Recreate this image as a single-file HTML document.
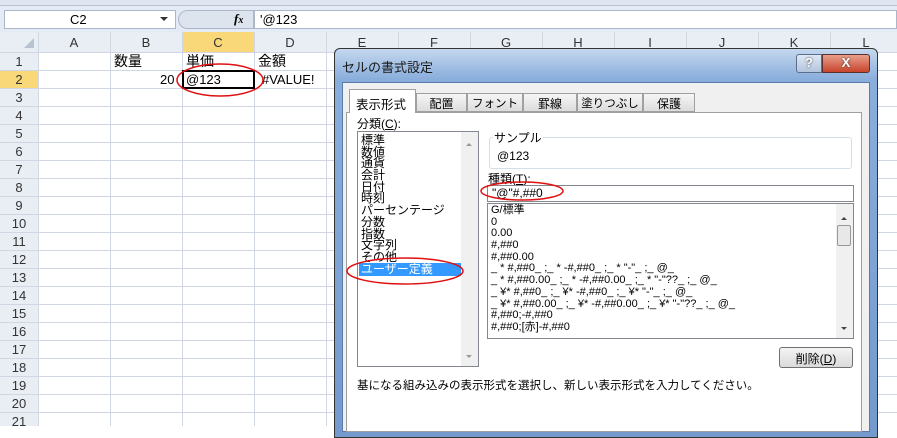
<!DOCTYPE html><html><head><meta charset="utf-8"><style>
*{margin:0;padding:0;box-sizing:border-box}
body{width:897px;height:426px;overflow:hidden;background:#fff;font-family:"Liberation Sans","Noto Sans CJK JP",sans-serif;font-size:13px;position:relative;color:#000}
.a{position:absolute;white-space:nowrap}
.jp{font-family:"Liberation Sans","Noto Sans CJK JP",sans-serif}
.tab{background:linear-gradient(#f6f6f6,#dcdcdc);border:1px solid #a0a0a0;font-size:12px;height:19px;top:93px;text-align:center;padding-top:1px}
.li div{height:11.7px;line-height:11.7px}
</style></head><body>
<div class="a" style="left:0;top:0;width:897px;height:6px;background:#dfe6f0;border-bottom:1px solid #b8c4d4"></div>
<div class="a" style="left:0;top:6px;width:897px;height:26px;background:#e4ebf5"></div>
<div class="a" style="left:4px;top:10px;width:172px;height:19px;background:#fff;border:1px solid #abb8cc"></div>
<div class="a" style="left:70px;top:12px;font-size:13px">C2</div>
<div class="a" style="left:160px;top:17px;border:4px solid transparent;border-top:4px solid #333"></div>
<div class="a" style="left:178px;top:10px;width:76px;height:19px;background:#dde4ee;border:1px solid #abb8cc;border-radius:10px 0 0 10px"></div>
<div class="a" style="left:234px;top:11px;font-family:'Liberation Serif',serif;font-style:italic;font-weight:bold;font-size:13px">f<span style="font-size:10px">x</span></div>
<div class="a" style="left:254px;top:10px;width:643px;height:19px;background:#fff;border:1px solid #abb8cc"></div>
<div class="a" style="left:260px;top:12px">'@123</div>
<svg class="a" style="left:0;top:32px" width="897" height="394">
<rect x="0" y="0" width="897" height="20" fill="#e9eef5"/>
<rect x="0" y="0" width="38" height="394" fill="#e9eef5"/>
<rect x="182" y="0" width="72" height="20" fill="#f8d878"/>
<rect x="0" y="38" width="38" height="18" fill="#f8d878"/>
<g stroke="#d0d7e2" stroke-width="1">
<path d="M38.5 0V394M110.5 0V394M182.5 0V394M254.5 0V394M326.5 0V394M398.5 0V394M470.5 0V394M542.5 0V394M614.5 0V394M686.5 0V394M758.5 0V394M830.5 0V394"/>
<path d="M0 20.5H897M0 38.5H897M0 56.5H897M0 74.5H897M0 92.5H897M0 110.5H897M0 128.5H897M0 146.5H897M0 164.5H897M0 182.5H897M0 200.5H897M0 218.5H897M0 236.5H897M0 254.5H897M0 272.5H897M0 290.5H897M0 308.5H897M0 326.5H897M0 344.5H897M0 362.5H897M0 380.5H897"/>
</g>
<path d="M24 16L34 6V16Z" fill="#b8c2d0"/>
<g font-family="Liberation Sans" font-size="13" fill="#333" text-anchor="middle">
<text x="74" y="15">A</text><text x="146" y="15">B</text><text x="218" y="15">C</text><text x="290" y="15">D</text><text x="362" y="15">E</text><text x="434" y="15">F</text><text x="506" y="15">G</text><text x="578" y="15">H</text><text x="650" y="15">I</text><text x="722" y="15">J</text><text x="794" y="15">K</text><text x="866" y="15">L</text>
<text x="19" y="34">1</text><text x="19" y="52">2</text><text x="19" y="70">3</text><text x="19" y="88">4</text><text x="19" y="106">5</text><text x="19" y="124">6</text><text x="19" y="142">7</text><text x="19" y="160">8</text><text x="19" y="178">9</text><text x="19" y="196">10</text><text x="19" y="214">11</text><text x="19" y="232">12</text><text x="19" y="250">13</text><text x="19" y="268">14</text><text x="19" y="286">15</text><text x="19" y="304">16</text><text x="19" y="322">17</text><text x="19" y="340">18</text><text x="19" y="358">19</text><text x="19" y="376">20</text><text x="19" y="394">21</text>
</g>
</svg>
<div class="a" style="left:114px;top:51px;font-size:14px">数量</div>
<div class="a" style="left:186px;top:51px;font-size:14px">単価</div>
<div class="a" style="left:258px;top:51px;font-size:14px">金額</div>
<div class="a" style="left:160px;top:72px">20</div>
<div class="a" style="left:182px;top:70px;width:73px;height:19px;border:2px solid #000"></div>
<div class="a" style="left:186px;top:72px">@123</div>
<div class="a" style="left:262px;top:72px">#VALUE!</div>
<!-- dialog -->
<div class="a" style="left:334px;top:48px;width:544px;height:390px;background:linear-gradient(#c4d8ee,#8aaedc 30px,#7399cd);border:1px solid #333;border-radius:6px 6px 0 0"></div>
<div class="a jp" style="left:342px;top:57px;font-size:13px;color:#1a1a1a">セルの書式設定</div>
<div class="a" style="left:796px;top:54px;width:26px;height:19px;background:linear-gradient(#dfe8f4,#b2c4dc);border:1px solid #5a6f8c;border-radius:3px 0 0 3px;text-align:center;font-weight:bold;color:#fff;font-size:13px;text-shadow:0 0 2px #333">?</div>
<div class="a" style="left:822px;top:54px;width:48px;height:19px;background:linear-gradient(#e8a08c,#c8442c);border:1px solid #5a3030;border-radius:0 3px 3px 0;text-align:center;font-weight:bold;color:#fff;font-size:13px;text-shadow:0 0 2px #333">X</div>
<div class="a" style="left:342px;top:82px;width:528px;height:350px;background:#f0f0f0;border:1px solid #5a7aa8"></div>
<div class="a" style="left:346px;top:112px;width:516px;height:320px;background:#fff;border:1px solid #a0a0a0"></div>
<div class="a jp" style="left:349px;top:89px;width:67px;height:24px;background:#fff;border:1px solid #a0a0a0;border-bottom:none;font-size:12.5px;padding:4px 0 0 6px">表示形式</div>
<div class="a jp tab" style="left:416px;width:51px">配置</div>
<div class="a jp tab" style="left:467px;width:56px;font-size:11.5px">フォント</div>
<div class="a jp tab" style="left:523px;width:54px">罫線</div>
<div class="a jp tab" style="left:577px;width:66px;font-size:11.5px">塗りつぶし</div>
<div class="a jp tab" style="left:643px;width:52px">保護</div>
<div class="a jp" style="left:357px;top:115px;font-size:12px">分類(<u>C</u>):</div>
<div class="a" style="left:357px;top:131px;width:122px;height:236px;border:1px solid #828790;background:#fff"></div>
<div class="a" style="left:461px;top:132px;width:17px;height:234px;background:#f0f0f0"></div>
<div class="a" style="left:466px;top:140px;border:3px solid transparent;border-bottom:3px solid #999"></div>
<div class="a" style="left:466px;top:355px;border:3px solid transparent;border-top:3px solid #999"></div>
<div class="a" style="left:359px;top:263px;width:102px;height:13px;background:#3399ff"></div>
<div class="a jp li" style="left:361px;top:135px;font-size:12px"><div>標準</div><div>数値</div><div>通貨</div><div>会計</div><div>日付</div><div>時刻</div><div>パーセンテージ</div><div>分数</div><div>指数</div><div>文字列</div><div>その他</div><div style="color:#fff">ユーザー定義</div></div>
<div class="a" style="left:489px;top:137px;width:363px;height:32px;border:1px solid #d5dfe5;border-radius:3px"></div>
<div class="a jp" style="left:493px;top:129px;font-size:12px;background:#fff;padding:0 1px">サンプル</div>
<div class="a" style="left:497px;top:149px;font-size:12px">@123</div>
<div class="a jp" style="left:488px;top:170px;font-size:12px">種類(<u>T</u>):</div>
<div class="a" style="left:487px;top:185px;width:367px;height:17px;border:1px solid #828790"></div>
<div class="a" style="left:492px;top:186px;font-size:12px">"@"#,##0</div>
<div class="a" style="left:487px;top:203px;width:367px;height:136px;border:1px solid #828790;background:#fff"></div>
<div class="a" style="left:836px;top:204px;width:17px;height:134px;background:#f0f0f0"></div>
<div class="a" style="left:837px;top:225px;width:14px;height:21px;background:#e8e8e8;border:1px solid #999;border-radius:2px"></div>
<div class="a" style="left:841px;top:214px;border:3px solid transparent;border-bottom:3px solid #444"></div>
<div class="a" style="left:841px;top:327px;border:3px solid transparent;border-top:3px solid #444"></div>
<div class="a jp li" style="left:491px;top:205px;font-size:11px;white-space:pre"><div>G/標準</div><div>0</div><div>0.00</div><div>#,##0</div><div>#,##0.00</div><div>_ * #,##0_ ;_ * -#,##0_ ;_ * "-"_ ;_ @_</div><div>_ * #,##0.00_ ;_ * -#,##0.00_ ;_ * "-"??_ ;_ @_</div><div>_ ¥* #,##0_ ;_ ¥* -#,##0_ ;_ ¥* "-"_ ;_ @_</div><div>_ ¥* #,##0.00_ ;_ ¥* -#,##0.00_ ;_ ¥* "-"??_ ;_ @_</div><div>#,##0;-#,##0</div><div>#,##0;[赤]-#,##0</div></div>
<div class="a jp" style="left:779px;top:347px;width:74px;height:21px;background:linear-gradient(#f4f4f4,#dadada);border:1px solid #707070;border-radius:3px;text-align:center;font-size:12px;padding-top:2px">削除(<u>D</u>)</div>
<div class="a jp" style="left:357px;top:377px;font-size:11.5px">基になる組み込みの表示形式を選択し、新しい表示形式を入力してください。</div>
<svg class="a" style="left:0;top:0" width="897" height="426"><g fill="none" stroke="#e01010" stroke-width="1.5">
<ellipse cx="220" cy="80" rx="43" ry="16"/><ellipse cx="522" cy="191" rx="41" ry="9"/><ellipse cx="405" cy="271" rx="58" ry="13"/></g></svg>
</body></html>
